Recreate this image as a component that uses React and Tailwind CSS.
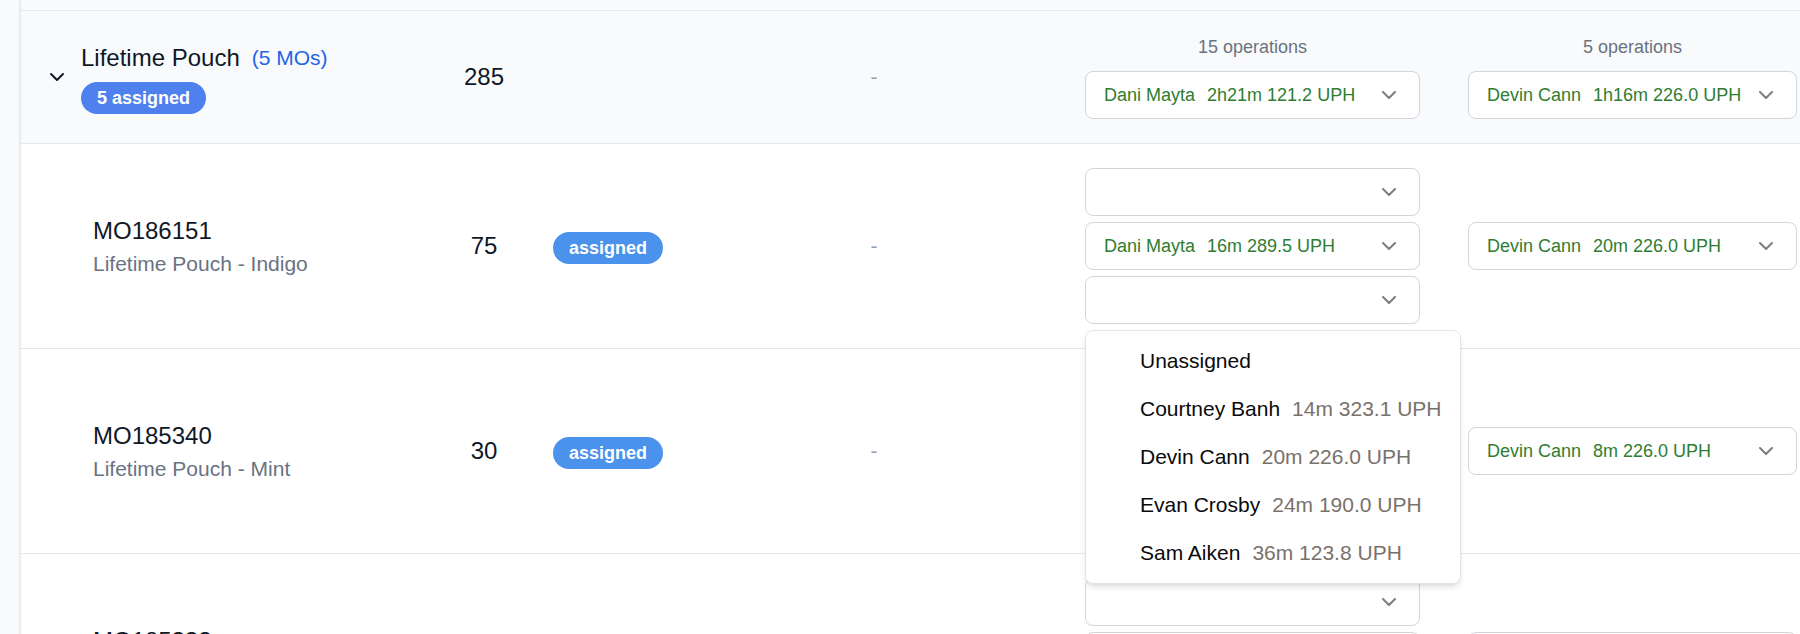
import { ChevronDown } from "lucide-react";

const GAP = "\u2004\u2004";

const workers = [
  { name: "Unassigned", rate: "" },
  { name: "Courtney Banh", rate: "14m 323.1 UPH" },
  { name: "Devin Cann", rate: "20m 226.0 UPH" },
  { name: "Evan Crosby", rate: "24m 190.0 UPH" },
  { name: "Sam Aiken", rate: "36m 123.8 UPH" },
];

const orders = [
  {
    id: "MO186151",
    product: "Lifetime Pouch - Indigo",
    quantity: 75,
    first: [null, { name: "Dani Mayta", rate: "16m 289.5 UPH" }, null],
    openIndex: 2,
    second: { name: "Devin Cann", rate: "20m 226.0 UPH" },
  },
  {
    id: "MO185340",
    product: "Lifetime Pouch - Mint",
    quantity: 30,
    first: [null, null, null],
    second: { name: "Devin Cann", rate: "8m 226.0 UPH" },
  },
  {
    id: "MO185333",
    product: "Lifetime Pouch - Black",
    quantity: 60,
    first: [null, null, null],
    second: { name: "Devin Cann", rate: "16m 226.0 UPH" },
  },
];

function WorkerSelect({ value, label }) {
  return (
    <div className="relative">
      <select
        aria-label={label}
        className="block h-12 w-full appearance-none rounded-lg border border-gray-300 bg-white pr-12 pl-[18px] text-lg text-[#2e7d32]"
      >
        <option>{value ? value.name + GAP + value.rate : ""}</option>
      </select>
      <ChevronDown
        aria-hidden="true"
        className="pointer-events-none absolute top-3 right-[19px] size-6 text-black opacity-50"
      />
    </div>
  );
}

function OpenWorkerSelect({ label }) {
  return (
    <div className="relative">
      <button
        type="button"
        aria-label={label}
        aria-haspopup="listbox"
        aria-expanded="true"
        className="flex h-12 w-full items-center justify-end rounded-lg border border-gray-300 bg-white px-[18px]"
      >
        <ChevronDown aria-hidden="true" className="size-6 text-black opacity-50" />
      </button>
      <ul
        role="listbox"
        aria-label={label}
        className="absolute top-full left-0 z-10 mt-1.5 w-max rounded-lg border border-neutral-200 bg-white p-1.5 shadow-md"
      >
        {workers.map((worker) => (
          <li
            key={worker.name}
            role="option"
            aria-selected="false"
            className="flex h-12 items-center gap-3 pr-3 pl-12 text-[21px] whitespace-nowrap text-neutral-950"
          >
            <span>{worker.name}</span>
            {worker.rate && <span className="text-stone-500">{worker.rate}</span>}
          </li>
        ))}
      </ul>
    </div>
  );
}

function Badge({ className, children }) {
  return (
    <span
      className={`inline-flex h-8 items-center rounded-full px-4 text-lg font-bold text-white ${className}`}
    >
      {children}
    </span>
  );
}

function GroupRow() {
  return (
    <tr className="bg-gray-50 [&>td]:border-y [&>td]:border-gray-200">
      <td className="px-6">
        <div className="flex items-center gap-3">
          <button type="button" aria-label="Collapse Lifetime Pouch" aria-expanded="true">
            <ChevronDown aria-hidden="true" className="size-6" />
          </button>
          <div className="flex flex-col items-start gap-1.5">
            <div className="flex items-center gap-3 leading-9">
              <span>Lifetime Pouch</span>
              <span className="text-[21px] text-[#2563eb]">(5 MOs)</span>
            </div>
            <Badge className="bg-[#4f81ee]">5 assigned</Badge>
          </div>
        </div>
      </td>
      <td className="text-center">285</td>
      <td />
      <td className="text-center text-[21px] text-gray-400">-</td>
      <td className="p-6">
        <div className="mb-3 text-center text-lg leading-6 text-gray-500">15 operations</div>
        <WorkerSelect
          label="Worker for 15 operations"
          value={{ name: "Dani Mayta", rate: "2h21m 121.2 UPH" }}
        />
      </td>
      <td className="p-6">
        <div className="mb-3 text-center text-lg leading-6 text-gray-500">5 operations</div>
        <WorkerSelect
          label="Worker for 5 operations"
          value={{ name: "Devin Cann", rate: "1h16m 226.0 UPH" }}
        />
      </td>
    </tr>
  );
}

function OrderRow({ order }) {
  return (
    <tr className="bg-white [&>td]:border-b [&>td]:border-gray-200">
      <td className="pl-[72px]">
        <div className="leading-9">{order.id}</div>
        <div className="text-[21px] leading-[30px] text-gray-500">{order.product}</div>
      </td>
      <td className="text-center">{order.quantity}</td>
      <td className="px-6 leading-9 whitespace-nowrap">
        <Badge className="bg-[#4a92eb]">assigned</Badge>
      </td>
      <td className="text-center text-[21px] text-gray-400">-</td>
      <td className="p-6">
        <div className="flex flex-col gap-1.5">
          {order.first.map((value, i) => {
            const label = `${order.id} operation ${i + 1} worker`;
            return order.openIndex === i ? (
              <OpenWorkerSelect key={i} label={label} />
            ) : (
              <WorkerSelect key={i} label={label} value={value} />
            );
          })}
        </div>
      </td>
      <td className="p-6">
        <WorkerSelect label={`${order.id} second stage worker`} value={order.second} />
      </td>
    </tr>
  );
}

export default function App() {
  return (
    <div className="h-screen overflow-hidden bg-gray-50 pl-5 font-['Liberation_Sans',Arial,sans-serif] text-2xl text-gray-900">
      <main className="h-full overflow-hidden border-l border-gray-200 bg-white shadow-sm">
        <div className="h-2.5 bg-gray-50" />
        <table className="w-full min-w-[1800px] table-fixed border-separate border-spacing-0">
          <colgroup>
            <col className="w-[418px]" />
            <col className="w-[90px]" />
            <col className="w-[158px]" />
            <col className="w-[374px]" />
            <col className="w-[383px]" />
            <col className="w-[377px]" />
          </colgroup>
          <tbody>
            <GroupRow />
            {orders.map((order) => (
              <OrderRow key={order.id} order={order} />
            ))}
          </tbody>
        </table>
      </main>
    </div>
  );
}
